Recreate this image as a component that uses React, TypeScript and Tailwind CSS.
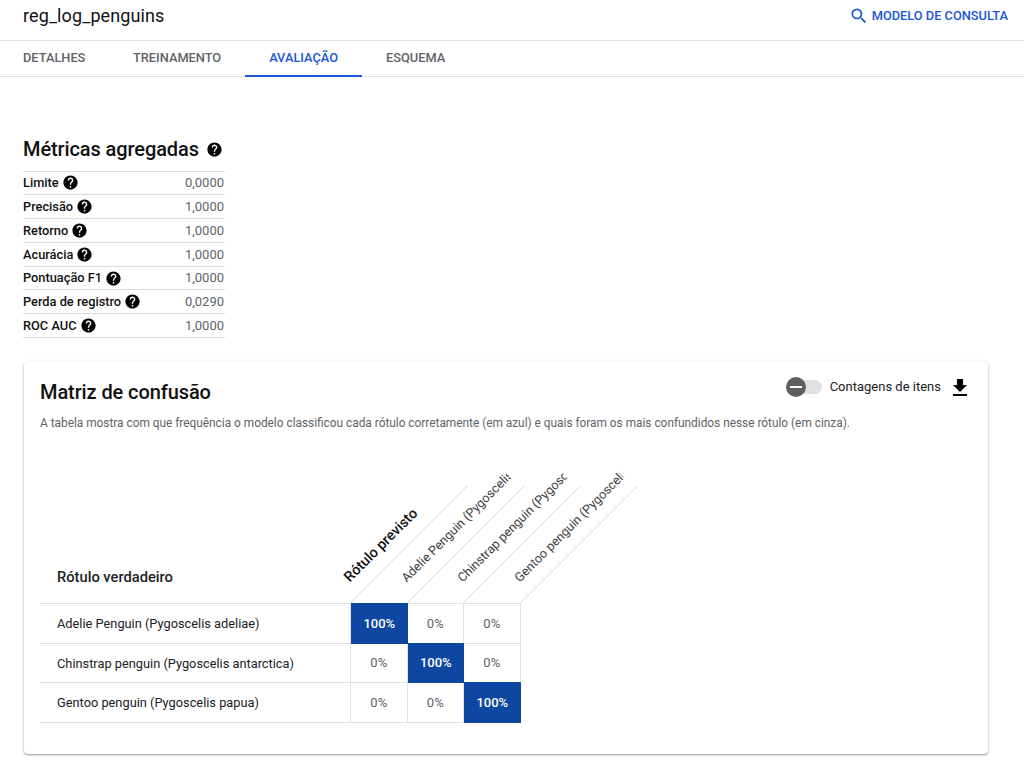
import { MdHelp, MdSearch, MdFileDownload } from "react-icons/md";

const metrics = [
  ["Limite", "0,0000"],
  ["Precisão", "1,0000"],
  ["Retorno", "1,0000"],
  ["Acurácia", "1,0000"],
  ["Pontuação F1", "1,0000"],
  ["Perda de registro", "0,0290"],
  ["ROC AUC", "1,0000"],
];

const rows = [
  ["Adelie Penguin (Pygoscelis adeliae)", "100%", "0%", "0%"],
  ["Chinstrap penguin (Pygoscelis antarctica)", "0%", "100%", "0%"],
  ["Gentoo penguin (Pygoscelis papua)", "0%", "0%", "100%"],
];

const heads = [
  "Adelie Penguin (Pygoscelis adeliae)",
  "Chinstrap penguin (Pygoscelis antarctica)",
  "Gentoo penguin (Pygoscelis papua)",
];

function Diagonal() {
  return <div className="absolute left-0 bottom-0 w-[165px] h-px bg-[#e0e0e0] origin-bottom-left -rotate-45" />;
}

export default function App() {
  return (
    <div className="w-[1024px] h-[767px] overflow-hidden bg-white text-[#202124] font-['Roboto',sans-serif]">
      <header className="h-[41px] border-b border-[#e0e0e0] flex items-start justify-between pl-[23px] pr-4">
        <h1 className="text-[18px] leading-[32px] tracking-[0.1px] text-[#111]">reg_log_penguins</h1>
        <button className="flex items-center gap-[3px] h-[32px] text-[#1a56d6] text-[12.8px] font-medium">
          <MdSearch size={20} />
          MODELO DE CONSULTA
        </button>
      </header>

      <nav className="h-[36px] border-b border-[#e0e0e0] flex text-[12.8px] font-medium text-[#5f6368]">
        <a className="w-[86px] ml-[23px] leading-[34px]">DETALHES</a>
        <a className="px-6 leading-[34px]">TREINAMENTO</a>
        <a className="px-6 leading-[34px] h-[36px] border-b-2 border-[#1a56d6] text-[#1a56d6]">AVALIAÇÃO</a>
        <a className="px-6 leading-[34px]">ESQUEMA</a>
      </nav>

      <main className="pl-6">
        <section className="pt-[57px] w-[201px]">
          <h2 className="-ml-px flex items-center gap-[7px] text-[20px] tracking-[-0.1px] leading-[30px] font-medium whitespace-nowrap h-[30px] text-[#111]">
            Métricas agregadas
            <MdHelp size={17} className="text-black" />
          </h2>
          <div className="-ml-px mt-[6.5px] border-t border-[#dadce0] w-[202px]">
            {metrics.map(([name, value]) => (
              <div key={name} className="h-[23.8px] border-b border-[#dadce0] flex items-center justify-between pr-[1px] text-[12.8px]">
                <span className="flex items-center gap-[3px] font-medium text-[#111]">
                  {name}
                  <MdHelp size={17} className="text-black" />
                </span>
                <span className="text-[#5f6368] text-[13px]">{value}</span>
              </div>
            ))}
          </div>
        </section>

        <section className="mt-[24px] w-[964px] h-[392px] rounded bg-white shadow-[0_1px_2px_rgba(60,64,67,0.5),0_0_4px_rgba(60,64,67,0.08)] px-4 relative">
          <div className="flex items-center justify-between h-[55px] pt-[2px]">
            <h3 className="text-[20px] tracking-[-0.1px] font-medium leading-none mt-[2px] text-[#111]">Matriz de confusão</h3>
            <div className="flex items-center -mt-[7px]">
              <div className="relative w-[36px] h-[20px] flex items-center justify-end">
                <div className="w-[29px] h-[14px] rounded-full bg-[#e0e0e0]" />
                <div className="absolute left-0 top-0 w-[20px] h-[20px] rounded-full bg-[#5f5f5f] flex items-center justify-center">
                  <div className="w-[12px] h-[2px] bg-white" />
                </div>
              </div>
              <span className="ml-[8px] text-[13px]">Contagens de itens</span>
              <MdFileDownload size={24} className="ml-[7px] mt-[2px] text-black" />
            </div>
          </div>
          <p className="text-[11.85px] leading-[18px] text-[#5f6368] -mt-[3px]">
            A tabela mostra com que frequência o modelo classificou cada rótulo corretamente (em azul) e quais foram os mais confundidos nesse rótulo (em cinza).
          </p>

          <div className="mt-[9px] w-[481px]">
            <div className="h-[162px] flex items-end">
              <div className="w-[311px] flex-none pl-[17px] pb-[16px] text-[14.7px] font-medium leading-[20px]">Rótulo verdadeiro</div>
              <div className="relative flex-none w-[56.5px] h-full">
                <Diagonal />
                <div className="absolute left-[3px] bottom-[16px] w-[148px] origin-bottom-left -rotate-45 overflow-hidden whitespace-nowrap text-[14.4px] font-medium leading-[20px] text-[#111]">Rótulo previsto</div>
              </div>
              {heads.map((h) => (
                <div key={h} className="relative flex-none w-[56.5px] h-full">
                  <Diagonal />
                  <div className="absolute left-[3px] bottom-[16px] w-[148px] origin-bottom-left -rotate-45 overflow-hidden whitespace-nowrap text-[12.6px] leading-[20px] text-[#3c4043]">{h}</div>
                </div>
              ))}
            </div>
            <div className="border-t border-[#e0e0e0]">
              {rows.map(([label, ...cells]) => (
                <div key={label} className="flex h-[39.7px] border-b border-[#e0e0e0]">
                  <div className="w-[310px] pl-[17px] flex items-center text-[12.8px] text-[#202124]">{label}</div>
                  <div className="flex border-l border-[#e0e0e0]">
                    {cells.map((c, i) =>
                      c === "100%" ? (
                        <div key={i} className="w-[56.5px] -mt-px -mb-px flex items-center justify-center bg-[#0d47a1] text-white text-[13px] font-medium">{c}</div>
                      ) : (
                        <div key={i} className="w-[56.5px] border-r border-[#e0e0e0] flex items-center justify-center text-[#5f6368] text-[13px]">{c}</div>
                      )
                    )}
                  </div>
                </div>
              ))}
            </div>
          </div>
        </section>
      </main>
    </div>
  );
}
